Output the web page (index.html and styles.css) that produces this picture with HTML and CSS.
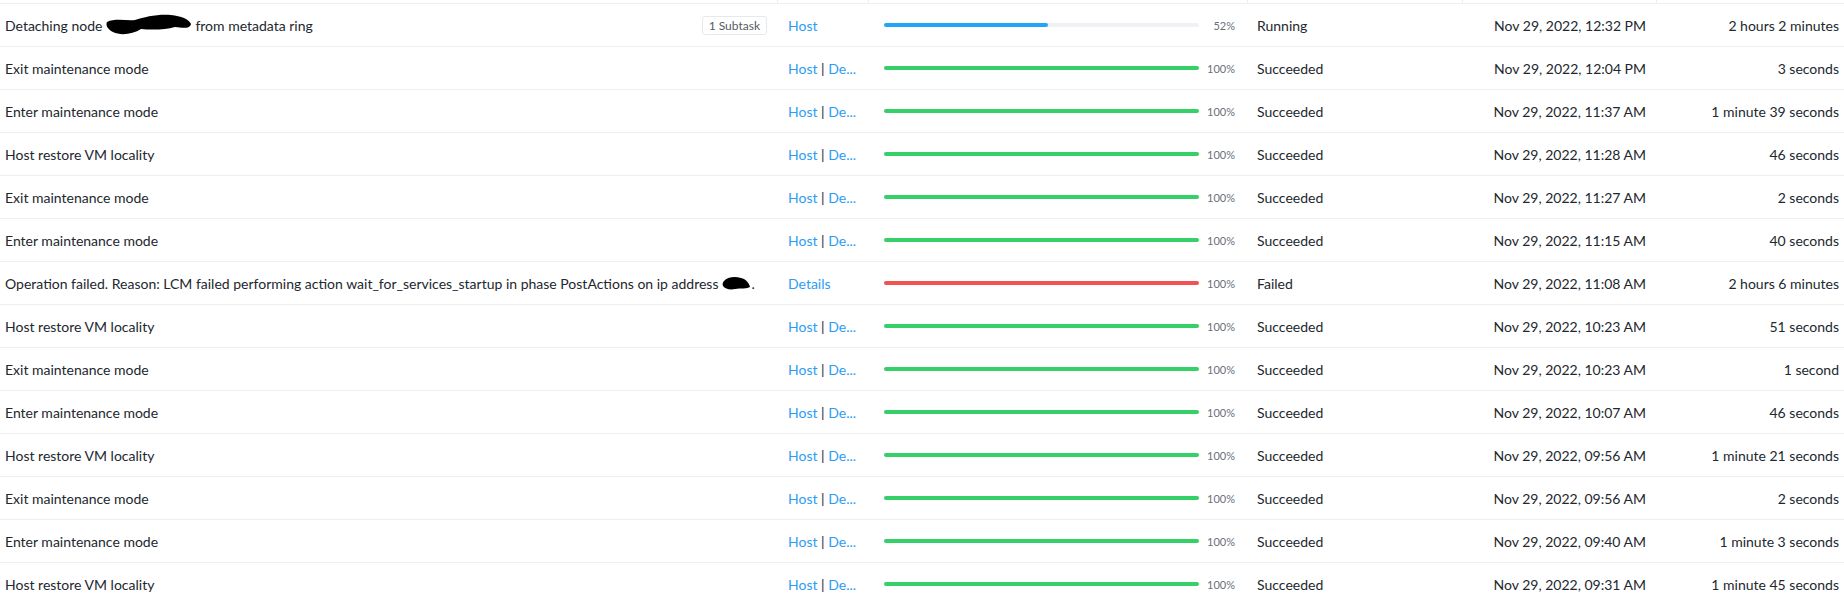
FILE: index.html
```html
<!DOCTYPE html>
<html lang="en">
<head>
   <meta charset="UTF-8">
   <title>Tasks</title>
   <link rel="stylesheet" href="styles.css">
</head>
<body>
   <div class="task-table">
      <div class="task-head">
         <div></div><div></div><div></div><div></div><div></div><div></div>
      </div>

      <div class="task-row">
         <div class="col-op">
            <span class="op-text">Detaching node <svg class="redact redact-node" width="88" height="24" viewBox="0 0 88 24"><path d="M2 9 C10 5 22 8 30 7 C40 4 52 1 66 2 C76 3 84 6 86 11 C85 16 78 15 70 14 C60 17 46 17 36 16 C28 21 16 23 8 19 C4 17 0 13 2 9 Z" fill="#000"/></svg> from metadata ring</span>
            <span class="subtask-badge">1 Subtask</span>
         </div>
         <div class="col-entity"><a href="#">Host</a></div>
         <div class="col-progress"><div class="bar"><div class="fill running" style="width: 52%"></div></div><span class="pct">52%</span></div>
         <div class="col-status">Running</div>
         <div class="col-date">Nov 29, 2022, 12:32 PM</div>
         <div class="col-duration">2 hours 2 minutes</div>
      </div>

      <div class="task-row">
         <div class="col-op"><span class="op-text">Exit maintenance mode</span></div>
         <div class="col-entity"><a href="#">Host</a> | <a href="#">De...</a></div>
         <div class="col-progress"><div class="bar"><div class="fill done" style="width: 100%"></div></div><span class="pct">100%</span></div>
         <div class="col-status">Succeeded</div>
         <div class="col-date">Nov 29, 2022, 12:04 PM</div>
         <div class="col-duration">3 seconds</div>
      </div>

      <div class="task-row">
         <div class="col-op"><span class="op-text">Enter maintenance mode</span></div>
         <div class="col-entity"><a href="#">Host</a> | <a href="#">De...</a></div>
         <div class="col-progress"><div class="bar"><div class="fill done" style="width: 100%"></div></div><span class="pct">100%</span></div>
         <div class="col-status">Succeeded</div>
         <div class="col-date">Nov 29, 2022, 11:37 AM</div>
         <div class="col-duration">1 minute 39 seconds</div>
      </div>

      <div class="task-row">
         <div class="col-op"><span class="op-text">Host restore VM locality</span></div>
         <div class="col-entity"><a href="#">Host</a> | <a href="#">De...</a></div>
         <div class="col-progress"><div class="bar"><div class="fill done" style="width: 100%"></div></div><span class="pct">100%</span></div>
         <div class="col-status">Succeeded</div>
         <div class="col-date">Nov 29, 2022, 11:28 AM</div>
         <div class="col-duration">46 seconds</div>
      </div>

      <div class="task-row">
         <div class="col-op"><span class="op-text">Exit maintenance mode</span></div>
         <div class="col-entity"><a href="#">Host</a> | <a href="#">De...</a></div>
         <div class="col-progress"><div class="bar"><div class="fill done" style="width: 100%"></div></div><span class="pct">100%</span></div>
         <div class="col-status">Succeeded</div>
         <div class="col-date">Nov 29, 2022, 11:27 AM</div>
         <div class="col-duration">2 seconds</div>
      </div>

      <div class="task-row">
         <div class="col-op"><span class="op-text">Enter maintenance mode</span></div>
         <div class="col-entity"><a href="#">Host</a> | <a href="#">De...</a></div>
         <div class="col-progress"><div class="bar"><div class="fill done" style="width: 100%"></div></div><span class="pct">100%</span></div>
         <div class="col-status">Succeeded</div>
         <div class="col-date">Nov 29, 2022, 11:15 AM</div>
         <div class="col-duration">40 seconds</div>
      </div>

      <div class="task-row">
         <div class="col-op"><span class="op-text">Operation failed. Reason: LCM failed performing action wait_for_services_startup in phase PostActions on ip address <svg class="redact redact-ip" width="30" height="16" viewBox="0 0 30 16"><path d="M3 6 C6 2 14 1 20 3 C25 4 28 8 29 12 C26 14 20 13 14 14 C9 15 4 14 2 11 C1 9 2 7 3 6 Z" fill="#000"/></svg>.</span></div>
         <div class="col-entity"><a href="#">Details</a></div>
         <div class="col-progress"><div class="bar"><div class="fill failed" style="width: 100%"></div></div><span class="pct">100%</span></div>
         <div class="col-status">Failed</div>
         <div class="col-date">Nov 29, 2022, 11:08 AM</div>
         <div class="col-duration">2 hours 6 minutes</div>
      </div>

      <div class="task-row">
         <div class="col-op"><span class="op-text">Host restore VM locality</span></div>
         <div class="col-entity"><a href="#">Host</a> | <a href="#">De...</a></div>
         <div class="col-progress"><div class="bar"><div class="fill done" style="width: 100%"></div></div><span class="pct">100%</span></div>
         <div class="col-status">Succeeded</div>
         <div class="col-date">Nov 29, 2022, 10:23 AM</div>
         <div class="col-duration">51 seconds</div>
      </div>

      <div class="task-row">
         <div class="col-op"><span class="op-text">Exit maintenance mode</span></div>
         <div class="col-entity"><a href="#">Host</a> | <a href="#">De...</a></div>
         <div class="col-progress"><div class="bar"><div class="fill done" style="width: 100%"></div></div><span class="pct">100%</span></div>
         <div class="col-status">Succeeded</div>
         <div class="col-date">Nov 29, 2022, 10:23 AM</div>
         <div class="col-duration">1 second</div>
      </div>

      <div class="task-row">
         <div class="col-op"><span class="op-text">Enter maintenance mode</span></div>
         <div class="col-entity"><a href="#">Host</a> | <a href="#">De...</a></div>
         <div class="col-progress"><div class="bar"><div class="fill done" style="width: 100%"></div></div><span class="pct">100%</span></div>
         <div class="col-status">Succeeded</div>
         <div class="col-date">Nov 29, 2022, 10:07 AM</div>
         <div class="col-duration">46 seconds</div>
      </div>

      <div class="task-row">
         <div class="col-op"><span class="op-text">Host restore VM locality</span></div>
         <div class="col-entity"><a href="#">Host</a> | <a href="#">De...</a></div>
         <div class="col-progress"><div class="bar"><div class="fill done" style="width: 100%"></div></div><span class="pct">100%</span></div>
         <div class="col-status">Succeeded</div>
         <div class="col-date">Nov 29, 2022, 09:56 AM</div>
         <div class="col-duration">1 minute 21 seconds</div>
      </div>

      <div class="task-row">
         <div class="col-op"><span class="op-text">Exit maintenance mode</span></div>
         <div class="col-entity"><a href="#">Host</a> | <a href="#">De...</a></div>
         <div class="col-progress"><div class="bar"><div class="fill done" style="width: 100%"></div></div><span class="pct">100%</span></div>
         <div class="col-status">Succeeded</div>
         <div class="col-date">Nov 29, 2022, 09:56 AM</div>
         <div class="col-duration">2 seconds</div>
      </div>

      <div class="task-row">
         <div class="col-op"><span class="op-text">Enter maintenance mode</span></div>
         <div class="col-entity"><a href="#">Host</a> | <a href="#">De...</a></div>
         <div class="col-progress"><div class="bar"><div class="fill done" style="width: 100%"></div></div><span class="pct">100%</span></div>
         <div class="col-status">Succeeded</div>
         <div class="col-date">Nov 29, 2022, 09:40 AM</div>
         <div class="col-duration">1 minute 3 seconds</div>
      </div>

      <div class="task-row">
         <div class="col-op"><span class="op-text">Host restore VM locality</span></div>
         <div class="col-entity"><a href="#">Host</a> | <a href="#">De...</a></div>
         <div class="col-progress"><div class="bar"><div class="fill done" style="width: 100%"></div></div><span class="pct">100%</span></div>
         <div class="col-status">Succeeded</div>
         <div class="col-date">Nov 29, 2022, 09:31 AM</div>
         <div class="col-duration">1 minute 45 seconds</div>
      </div>
   </div>
</body>
</html>
```

FILE: styles.css
```css
body {
   margin: 0;
   background-color: #fff;
   font-family: 'Lato', 'Liberation Sans', sans-serif;
   font-size: 14px;
   color: #22272e;
   overflow: hidden;
}

.task-table {
   width: 1844px;
}

/* columns shared by header and rows */
.task-head,
.task-row {
   display: grid;
   grid-template-columns: 777px 91px 379px 215px 194px 188px;
}

.task-head {
   height: 3px;
   border-bottom: 1px solid #eceef1;
}
.task-head div + div {
   border-left: 1px solid #eceef1;
}

.task-row {
   height: 42px;
   border-bottom: 1px solid #eceef1;
   align-items: center;
}

.col-op {
   display: flex;
   align-items: center;
   justify-content: space-between;
   padding: 0 10px 0 5px;
   white-space: nowrap;
}
.op-text {
   display: flex;
   align-items: center;
}
.redact {
   display: inline-block;
}
.redact-node {
   margin: 0 2px 0 3px;
}
.redact-ip {
   margin-left: 3px;
}

.subtask-badge {
   font-size: 12px;
   color: #555b63;
   border: 1px solid #e6e8eb;
   border-radius: 3px;
   padding: 2px 6px;
   line-height: 13px;
}

.col-entity {
   padding: 0 4px 0 11px;
   white-space: nowrap;
   color: #22272e;
}
.col-entity a {
   color: #2d9cf5;
   text-decoration: none;
}

.col-progress {
   display: flex;
   align-items: center;
   padding: 0 12px 0 16px;
}
.bar {
   width: 315px;
   height: 4px;
   border-radius: 2px;
   background-color: #eff1f4;
}
.fill {
   height: 100%;
   border-radius: 2px;
}
.fill.running {
   background-color: #22a5f7;
}
.fill.done {
   background-color: #36d068;
}
.fill.failed {
   background-color: #f25252;
}
.pct {
   flex: 1;
   text-align: right;
   font-size: 11px;
   color: #6a7079;
}

.col-status {
   padding-left: 10px;
}

.col-date {
   text-align: right;
   padding-right: 10px;
}

.col-duration {
   text-align: right;
   padding-right: 5px;
}
```
